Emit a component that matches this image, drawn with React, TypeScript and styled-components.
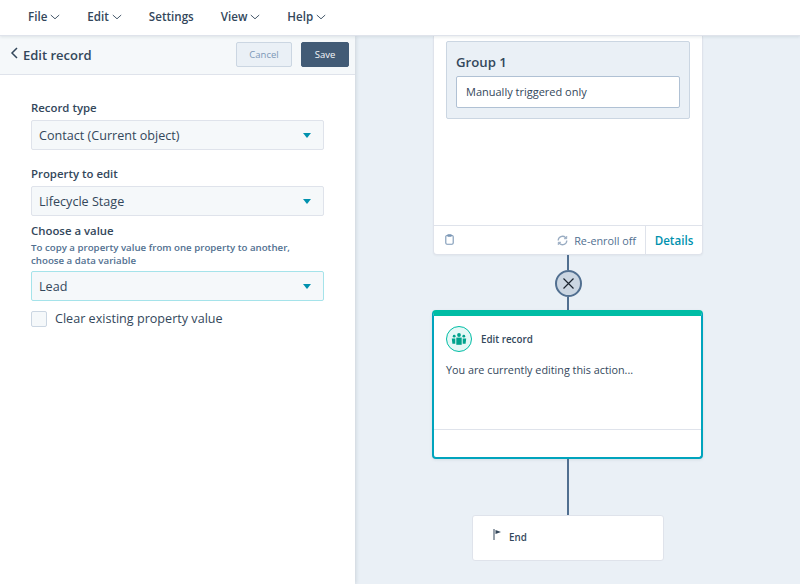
import React from "react";
import styled, { createGlobalStyle } from "styled-components";

const Global = createGlobalStyle`
  html, body { margin: 0; padding: 0; }
  body { width: 800px; height: 584px; overflow: hidden; font-family: "Open Sans", "Noto Sans", sans-serif; color: #33475b; background: #eaf0f6; }
  * { box-sizing: border-box; }
`;

const Page = styled.div`
  width: 800px; height: 584px; display: flex; flex-direction: column; overflow: hidden;
`;
const TopBar = styled.nav`
  height: 36px; flex: none; background: #fff; display: flex; align-items: center;
  padding: 0 0 2px 28px; gap: 27px; border-bottom: 1px solid #dfe3eb;
  box-shadow: 0 1px 3px rgba(45,62,80,.12); position: relative; z-index: 2;
`;
const MenuItem = styled.div`
  display: flex; align-items: center; gap: 3px; font-size: 11.6px; font-weight: 600; color: #33475b;
`;
const Body = styled.div`
  flex: 1; display: flex; min-height: 0;
`;
const Panel = styled.aside`
  width: 355px; flex: none; background: #fff; box-shadow: 1px 0 4px rgba(45,62,80,.16);
  position: relative; z-index: 1;
`;
const PanelHeader = styled.header`
  height: 39px; background: #f5f8fa; border-bottom: 1px solid #dfe3eb;
  display: flex; align-items: center; padding: 0 6px 1px 10px;
`;
const BackTitle = styled.div`
  flex: 1; display: flex; align-items: center; gap: 4px; font-size: 13px; font-weight: 600; color: #33475b;
`;
const Button = styled.button<{ $primary?: boolean }>`
  height: 25px; width: ${p => (p.$primary ? 48 : 56)}px; border-radius: 2px; padding: 0; font: inherit; font-size: 9.5px;
  margin-left: ${p => (p.$primary ? 9 : 0)}px;
  background: ${p => (p.$primary ? "#425b76" : "#eaf0f6")};
  border: 1px solid ${p => (p.$primary ? "#425b76" : "#cbd6e2")};
  color: ${p => (p.$primary ? "#f5f8fa" : "#7c98b6")};
`;
const Form = styled.div`
  padding: 26px 31px 0; display: flex; flex-direction: column;
`;
const Label = styled.div<{ $mt?: number }>`
  font-size: 11.4px; line-height: 14px; font-weight: 600; color: #33475b; margin-top: ${p => p.$mt ?? 0}px; margin-bottom: 5px;
`;
const Help = styled.div`
  font-size: 9.7px; line-height: 13px; font-weight: 600; color: #516f90; margin: -2px 0 4px;
`;
const Select = styled.div<{ $focus?: boolean }>`
  height: 30px; background: #f5f8fa; border: 1px solid ${p => (p.$focus ? "#a5e3ea" : "#dfe3eb")}; border-radius: 2px;
  display: flex; align-items: center; justify-content: space-between; padding: 0 12px 0 7px;
  font-size: 12.6px; color: #33475b;
`;
const Caret = styled.span`
  width: 0; height: 0; border-left: 4.5px solid transparent; border-right: 4.5px solid transparent; border-top: 5px solid #0091ae;
`;
const CheckRow = styled.label`
  display: flex; align-items: center; gap: 8px; margin-top: 9px; font-size: 12.6px; color: #33475b;
`;
const Checkbox = styled.span`
  width: 16px; height: 16px; border: 1px solid #cbd6e2; border-radius: 2px; background: #f5f8fa;
`;
const Canvas = styled.main`
  flex: 1; background: #eaf0f6; padding-left: 78px; overflow: hidden;
`;
const Flow = styled.div`
  width: 270px; display: flex; flex-direction: column; align-items: center;
`;
const TriggerCard = styled.section`
  width: 270px; height: 219px; background: #fff; border: 1px solid #dfe3eb; border-top: 0; border-radius: 0 0 4px 4px;
  display: flex; flex-direction: column; padding-top: 5px;
  box-shadow: 0 1px 2px rgba(45,62,80,.05);
`;
const Group = styled.div`
  margin: 0 12px 0 12px; height: 78px; background: #eaf0f6; border: 1px solid #cbd6e2; border-radius: 2px;
  padding: 12px 9px 0;
`;
const GroupTitle = styled.div`
  font-size: 13.2px; line-height: 17px; font-weight: 600; color: #33475b; margin-bottom: 5px;
`;
const Filter = styled.div`
  height: 32px; background: #fff; border: 1px solid #b0c1d4; border-radius: 2px; display: flex; align-items: center;
  padding: 0 0 2px 9px; font-size: 11px; color: #33475b;
`;
const CardFooter = styled.div`
  margin-top: auto; height: 29px; border-top: 1px solid #dfe3eb; display: flex; align-items: stretch; font-size: 11px;
`;
const Note = styled.div`
  flex: 1; padding: 0 0 2px 11px; display: flex; align-items: center; color: #7c98b6;
`;
const Reenroll = styled.div`
  display: flex; align-items: center; gap: 6px; padding-right: 9px; color: #516f90; font-size: 10.8px;
`;
const Details = styled.div`
  width: 57px; border-left: 1px solid #dfe3eb; display: flex; align-items: center; justify-content: center;
  font-weight: 600; font-size: 11.6px; color: #0091ae;
`;
const Line = styled.div<{ $h: number }>`
  width: 2px; height: ${p => p.$h}px; background: #516f90; flex: none;
`;
const Delete = styled.div`
  width: 27px; height: 27px; flex: none; border-radius: 50%; background: #cbd6e2; border: 2px solid #516f90;
  display: flex; align-items: center; justify-content: center;
`;
const ActionCard = styled.section`
  width: 271px; height: 149px; flex: none; margin-left: -1px; background: #fff; border: 2px solid #00a4bd; border-top: 6px solid #00bda5;
  border-radius: 4px; display: flex; flex-direction: column; box-shadow: 0 1px 3px rgba(45,62,80,.1);
`;
const ActionHead = styled.div`
  display: flex; align-items: center; gap: 9px; padding: 10px 12px 0; font-size: 9.8px; font-weight: 600; color: #33475b;
`;
const ActionIcon = styled.span`
  width: 26px; height: 26px; border-radius: 50%; background: #e5f8f6; border: 1.5px solid #00bda5;
  display: flex; align-items: center; justify-content: center;
`;
const ActionText = styled.div`
  padding: 11px 12px 0; font-size: 10.8px; color: #33475b; line-height: 14px;
`;
const ActionFoot = styled.div`
  margin-top: auto; height: 28px; border-top: 1px solid #dfe3eb;
`;
const EndCard = styled.section`
  width: 192px; height: 46px; flex: none; background: #fff; border: 1px solid #dfe3eb; border-radius: 3px;
  display: flex; align-items: center; gap: 6px; padding: 0 0 1px 20px; font-size: 9.8px; font-weight: 600; color: #33475b;
`;

const Chevron = () => (
  <svg width="10" height="6" viewBox="0 0 10 6" fill="none" stroke="#33475b" strokeWidth="0.9"><path d="M.8 1l4.2 3.8L9.2 1" /></svg>
);

const menu: [string, boolean][] = [["File", true], ["Edit", true], ["Settings", false], ["View", true], ["Help", true]];

export default function App() {
  return (
    <Page>
      <Global />
      <TopBar>
        {menu.map(([label, chev]) => (
          <MenuItem key={label}>{label}{chev && <Chevron />}</MenuItem>
        ))}
      </TopBar>
      <Body>
        <Panel>
          <PanelHeader>
            <BackTitle>
              <svg width="9" height="12" viewBox="0 0 9 12" fill="none" stroke="#33475b" strokeWidth="1.5" style={{ marginTop: -3 }}><path d="M7 1L2 6l5 5" /></svg>
              Edit record
            </BackTitle>
            <Button>Cancel</Button>
            <Button $primary>Save</Button>
          </PanelHeader>
          <Form>
            <Label>Record type</Label>
            <Select>Contact (Current object)<Caret /></Select>
            <Label $mt={17}>Property to edit</Label>
            <Select>Lifecycle Stage<Caret /></Select>
            <Label $mt={8}>Choose a value</Label>
            <Help>To copy a property value from one property to another,<br />choose a data variable</Help>
            <Select $focus>Lead<Caret /></Select>
            <CheckRow><Checkbox />Clear existing property value</CheckRow>
          </Form>
        </Panel>
        <Canvas>
          <Flow>
            <TriggerCard>
              <Group>
                <GroupTitle>Group 1</GroupTitle>
                <Filter>Manually triggered only</Filter>
              </Group>
              <CardFooter>
                <Note>
                  <svg width="9" height="11" viewBox="0 0 9 11" fill="none" stroke="#7c98b6" strokeWidth="1.1"><rect x=".8" y="1.5" width="7.4" height="8.8" rx="1.2" /><path d="M3 .8h3v1.4H3z" fill="#7c98b6" /></svg>
                </Note>
                <Reenroll>
                  <svg width="11" height="11" viewBox="0 0 11 11" fill="none" stroke="#99acc2" strokeWidth="1.3"><path d="M1.2 5.5a4.3 4.3 0 017.3-3l1 1" /><path d="M9.8 5.5a4.3 4.3 0 01-7.3 3l-1-1" /><path d="M9.7 1v2.7H7M1.3 10V7.3H4" strokeWidth="1" /></svg>
                  Re-enroll off
                </Reenroll>
                <Details>Details</Details>
              </CardFooter>
            </TriggerCard>
            <Line $h={15} />
            <Delete>
              <svg width="13" height="13" viewBox="0 0 13 13" stroke="#1c2530" strokeWidth="1.2"><path d="M1.5 1.5l10 10M11.5 1.5l-10 10" /></svg>
            </Delete>
            <Line $h={13} />
            <ActionCard>
              <ActionHead>
                <ActionIcon>
                  <svg width="16" height="12" viewBox="0 0 16 12" fill="#00a38d"><circle cx="8" cy="2" r="1.9" /><path d="M5.3 4.6h5.4v7.2H5.3z" /><circle cx="3.2" cy="3.2" r="1.4" /><path d="M.8 5.6h3.5v5.2H1.4zM11.7 5.6h3.5l-.6 5.2h-2.9z" /><circle cx="12.8" cy="3.2" r="1.4" /></svg>
                </ActionIcon>
                Edit record
              </ActionHead>
              <ActionText>You are currently editing this action...</ActionText>
              <ActionFoot />
            </ActionCard>
            <Line $h={56} />
            <EndCard>
              <svg width="10" height="12" viewBox="0 0 10 12" style={{ marginTop: -5 }}><path d="M1 0v11" stroke="#33475b" strokeWidth="1" /><path d="M2.5 1l5.5 2-5.5 2z" fill="#33475b" /></svg>
              End
            </EndCard>
          </Flow>
        </Canvas>
      </Body>
    </Page>
  );
}
